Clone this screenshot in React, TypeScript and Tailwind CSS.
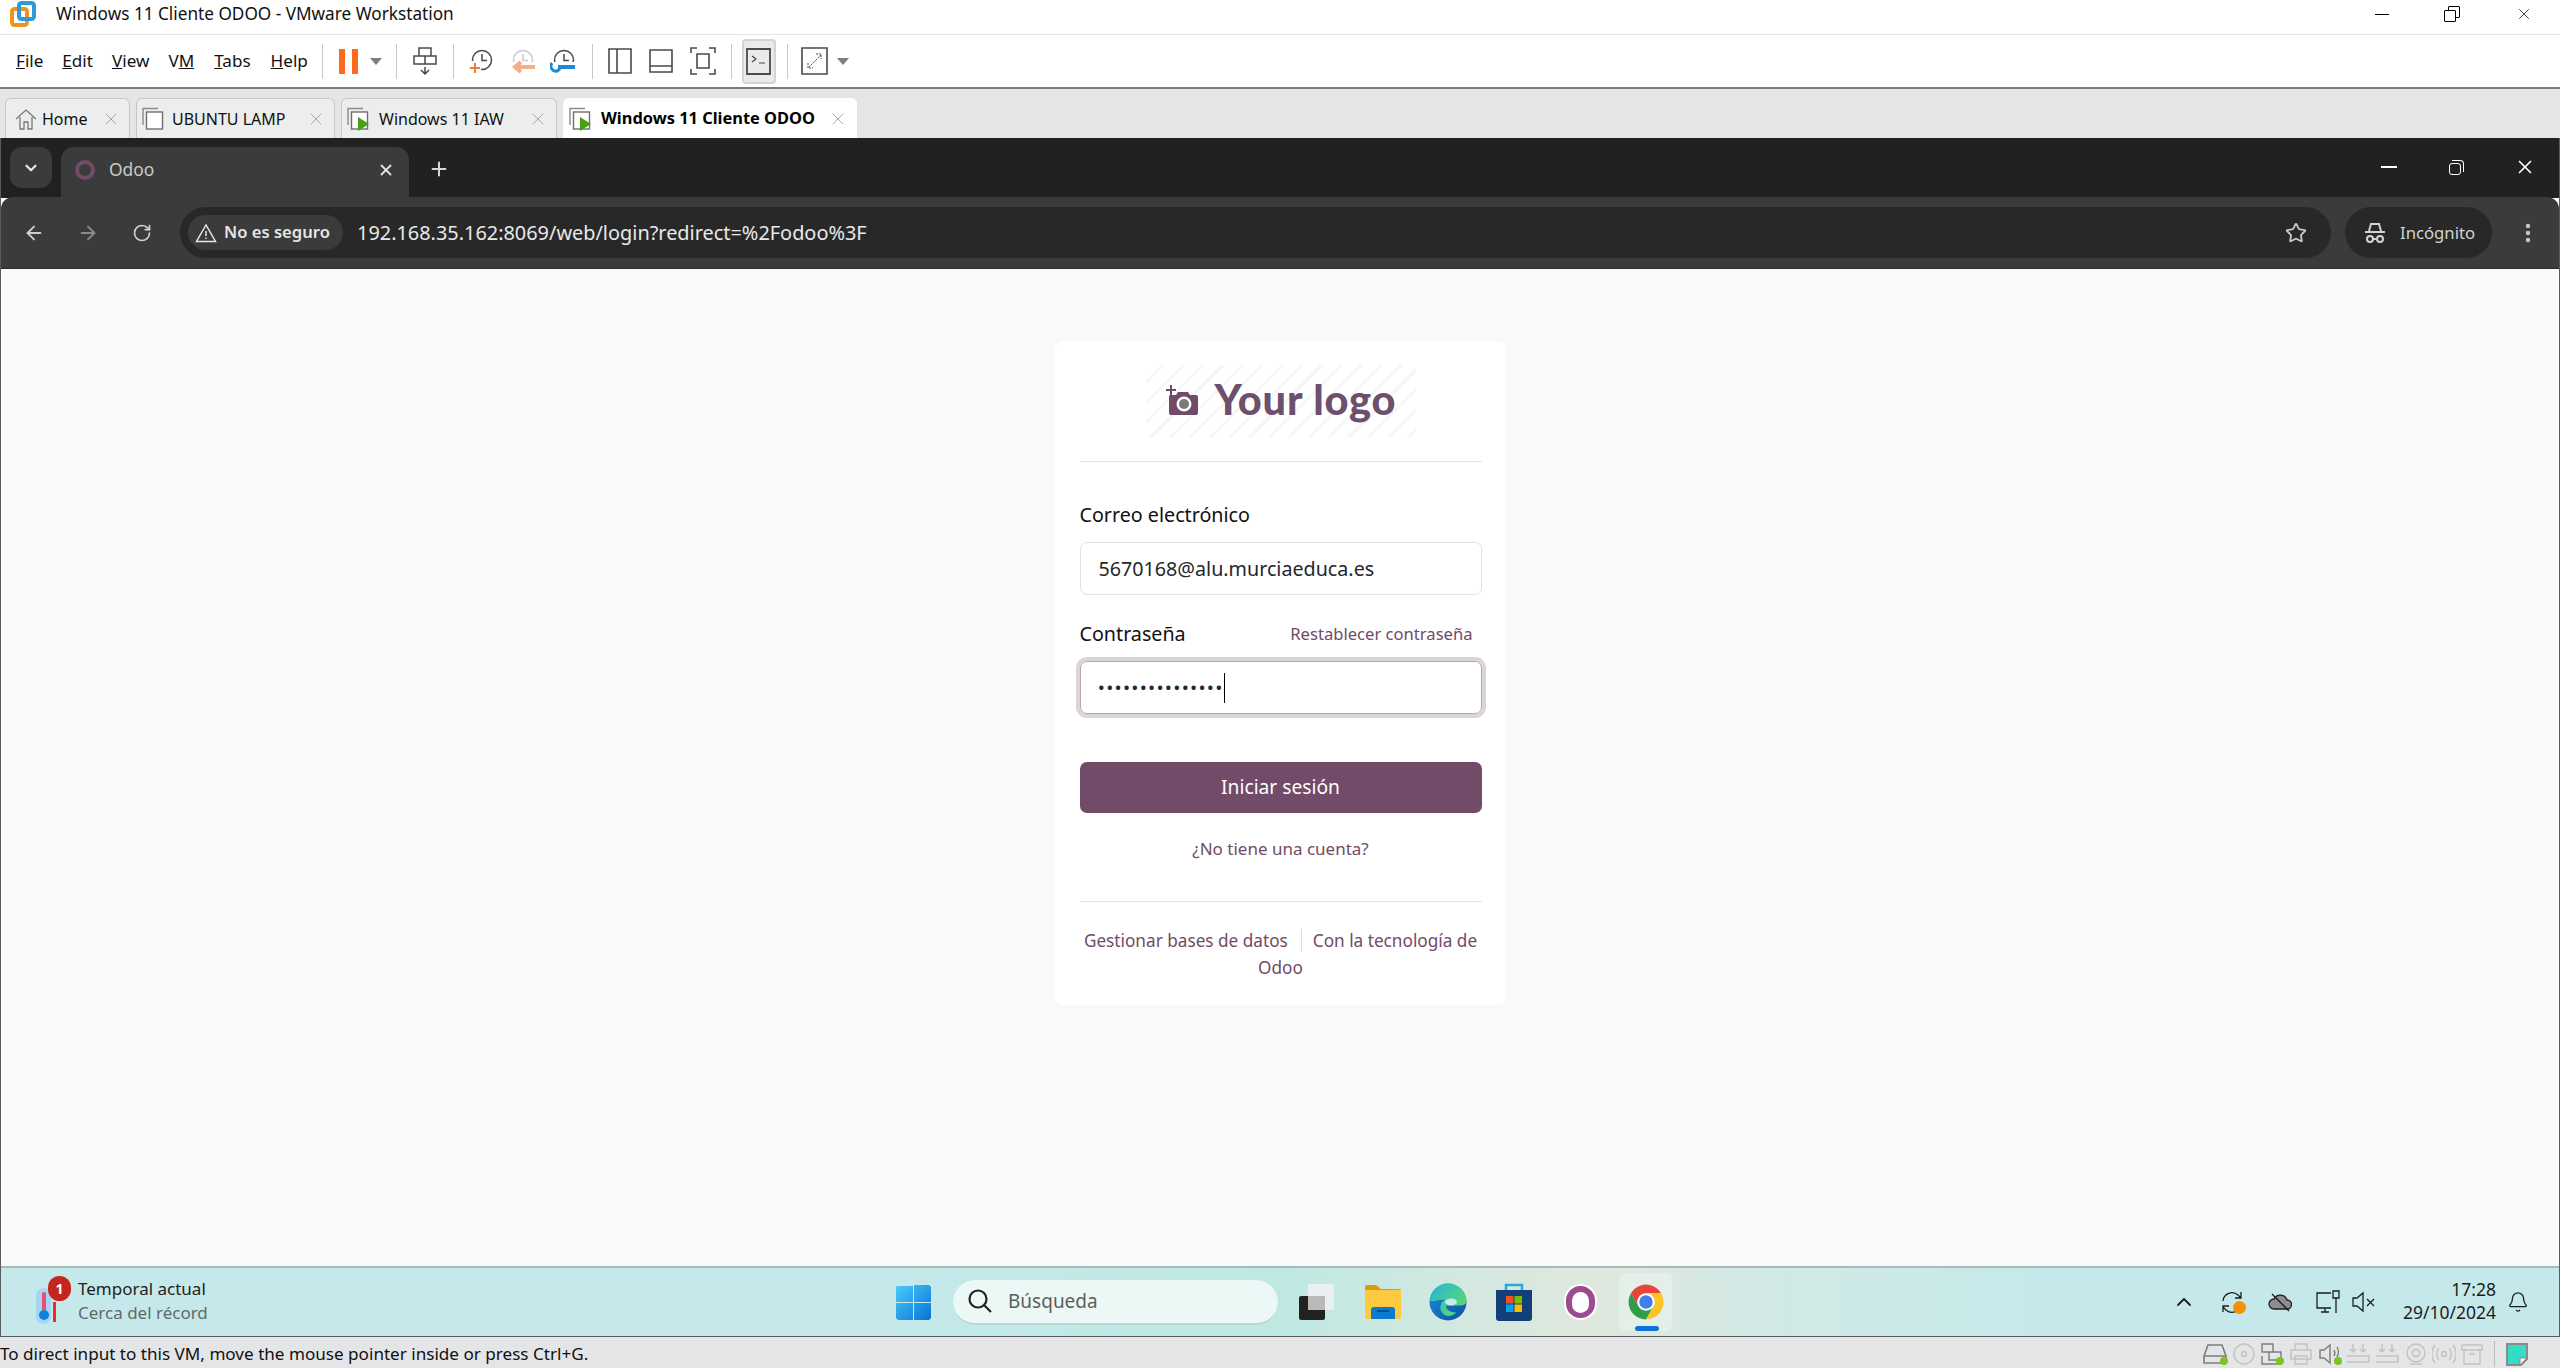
import { ArrowLeft, ArrowRight, BellIcon, ChevronDown, ChevronUp, MoreVertical, Plus, RotateCw, Star, X } from "lucide-react"

function Sep({ className }: { className: string }) {
  return <div className={`w-px h-[35px] bg-[#c8c8c8] ${className}`} />
}

function Caret({ className = "" }: { className?: string }) {
  return (
    <svg width="12" height="7" viewBox="0 0 12 7" className={className}>
      <path d="M0 0h12L6 7z" fill="#7d7d7d" />
    </svg>
  )
}

function VmwareLogo() {
  return (
    <svg width="26" height="26" viewBox="0 0 26 26">
      <rect x="2" y="8" width="15" height="16" rx="2.5" fill="none" stroke="#f0931e" strokeWidth="4" />
      <rect x="9" y="2" width="15" height="16" rx="2.5" fill="none" stroke="#2d9bd8" strokeWidth="4" />
    </svg>
  )
}

function SnapshotIcon({ kind }: { kind: "add" | "back" | "manage" }) {
  const ring = kind === "back" ? "#c9c9c9" : "#4a4a4a"
  return (
    <svg width="26" height="26" viewBox="0 0 26 26" fill="none">
      <circle cx="14" cy="12" r="9.5" stroke={ring} strokeWidth="1.5" />
      <path d="M14 6v6.5h5" stroke={ring} strokeWidth="1.5" />
      {kind === "add" && (
        <>
          <rect x="1" y="13" width="12" height="12" fill="#fff" />
          <path d="M7 15v10M2 20h10" stroke="#f47a3a" strokeWidth="2" />
        </>
      )}
      {kind === "back" && (
        <>
          <rect x="1" y="14" width="25" height="9" fill="#fff" />
          <path d="M26 19H8M12 14l-6 5 6 5" stroke="#f8ad8a" strokeWidth="4" />
        </>
      )}
      {kind === "manage" && (
        <>
          <rect x="1" y="14" width="25" height="11" fill="#fff" />
          <path d="M25 19H8" stroke="#1d8ad6" strokeWidth="4" />
          <path d="M2 15a5 5 0 0 0 5 8 5 5 0 0 0 3-4" stroke="#1d8ad6" strokeWidth="3" />
        </>
      )}
    </svg>
  )
}

function VmPageIcon({ play }: { play?: boolean }) {
  return (
    <svg width="24" height="24" viewBox="0 0 24 24" fill="none">
      <path d="M1 18V1.5h15" stroke="#8a8a8a" strokeWidth="1.4" />
      <rect x="4.5" y="5" width="16" height="17" stroke="#6f6f6f" strokeWidth="1.4" fill="#fff" />
      {play && <path d="M11 10l11 7-11 7z" fill="#46a011" />}
    </svg>
  )
}

function VmTab({ label, icon, w, active, gap }: { label: string; icon: React.ReactNode; w: string; active?: boolean; gap: string }) {
  return (
    <div
      className={`${w} h-[40px] flex items-center pl-[5px] rounded-t-[6px] border border-b-0 ${
        active ? "bg-white border-white font-bold text-black text-[16.4px]" : "bg-[#eceded] border-[#c4c6c8] text-[#111] text-[16px]"
      }`}
    >
      {icon}
      <span className={`${gap} whitespace-nowrap flex-1`}>{label}</span>
      <X size={20} strokeWidth={1.2} className="text-[#a9a9a9] mr-[8px]" />
    </div>
  )
}

function WinLogo() {
  return (
    <svg width="35" height="35" viewBox="0 0 35 35">
      <defs>
        <linearGradient id="win" x1="0" y1="0" x2="1" y2="1">
          <stop offset="0" stopColor="#4ccbfb" />
          <stop offset="1" stopColor="#0673d5" />
        </linearGradient>
      </defs>
      <path d="M1 1h16v16H0V2zM18 0h15l2 2v15H18zM0 18h17v17H2l-2-2zM18 18h17v15l-2 2H18z" fill="url(#win)" />
    </svg>
  )
}

function ChromeIcon() {
  return (
    <svg width="38" height="38" viewBox="0 0 48 48">
      <circle cx="24" cy="24" r="12" fill="#fff" />
      <path d="M4.95 13A22 22 0 0 1 43.05 13L24 13A11 11 0 0 0 14.47 29.5Z" fill="#e8453a" />
      <path d="M4.95 13A22 22 0 0 0 24 46L33.53 29.5A11 11 0 0 1 14.47 29.5Z" fill="#2f9e4a" />
      <path d="M24 46A22 22 0 0 0 43.05 13L24 13A11 11 0 0 1 33.53 29.5Z" fill="#fcc425" />
      <circle cx="24" cy="24" r="8.5" fill="#3f7fe8" />
    </svg>
  )
}

function EdgeIcon() {
  return (
    <svg width="38" height="38" viewBox="0 0 38 38">
      <defs>
        <linearGradient id="edgeA" x1="0" y1="0" x2="1" y2="0.7">
          <stop offset="0" stopColor="#22b7d9" />
          <stop offset="1" stopColor="#5ed86e" />
        </linearGradient>
        <linearGradient id="edgeB" x1="0" y1="0" x2="1" y2="1">
          <stop offset="0" stopColor="#1a93dd" />
          <stop offset="1" stopColor="#0b4f9e" />
        </linearGradient>
      </defs>
      <circle cx="19" cy="19" r="18.5" fill="url(#edgeB)" />
      <path d="M1 17C3 6 11 .5 19 .5c10 0 18 8 18.5 17 0 4-3 5-7 5H17c0 4 4 7 10 7-3 4-11 5-14 0-3-4-2-10 3-13-6 0-12 3-15 1z" fill="url(#edgeA)" />
      <ellipse cx="22" cy="19" rx="6" ry="3.6" fill="#c8ebe5" />
    </svg>
  )
}

function StoreIcon() {
  return (
    <svg width="36" height="38" viewBox="0 0 36 38">
      <path d="M10 7V2h16v5" fill="none" stroke="#29a4e0" strokeWidth="2.5" />
      <path d="M0 7h36v28a3 3 0 0 1-3 3H3a3 3 0 0 1-3-3z" fill="#123f78" />
      <rect x="10" y="13" width="7.5" height="7.5" fill="#f25022" />
      <rect x="18.5" y="13" width="7.5" height="7.5" fill="#7fba00" />
      <rect x="10" y="21.5" width="7.5" height="7.5" fill="#00a4ef" />
      <rect x="18.5" y="21.5" width="7.5" height="7.5" fill="#ffb900" />
    </svg>
  )
}

function FolderIcon() {
  return (
    <svg width="36" height="34" viewBox="0 0 36 34">
      <path d="M0 2a2 2 0 0 1 2-2h9l5 4h18a2 2 0 0 1 2 2v4H0z" fill="#dc9d0c" />
      <path d="M0 5h36v27a2 2 0 0 1-2 2H2a2 2 0 0 1-2-2z" fill="#fdc93f" />
      <path d="M6 34v-9a3 3 0 0 1 3-3h18a3 3 0 0 1 3 3v9z" fill="#0c7bcd" />
      <path d="M12 26h12" stroke="#063f7d" strokeWidth="1.5" />
    </svg>
  )
}

function TaskViewIcon() {
  return (
    <svg width="36" height="36" viewBox="0 0 36 36">
      <rect x="0" y="12" width="26" height="24" rx="2" fill="#222" />
      <rect x="9" y="0" width="26" height="26" rx="2" fill="#f1f1f1" fillOpacity="0.85" />
      <rect x="9" y="12" width="17" height="14" fill="#b9b9b9" />
    </svg>
  )
}

function TrayIcon({ children, w = 24 }: { children: React.ReactNode; w?: number }) {
  return (
    <svg width={w} height="24" viewBox={`0 0 ${w} 24`} fill="none" stroke="#1d1d1d" strokeWidth="1.3">
      {children}
    </svg>
  )
}

function StatusIcon({ children, className }: { children: React.ReactNode; className: string }) {
  return (
    <svg width="24" height="24" viewBox="0 0 24 24" fill="none" stroke="#c2c2c2" strokeWidth="1.4" className={className}>
      {children}
    </svg>
  )
}

export default function App() {
  return (
    <div className="w-[2560px] h-[1368px] overflow-hidden flex flex-col bg-white text-black font-['Noto_Sans','Open_Sans',sans-serif]">
      {/* vmware title bar */}
      <div className="h-[34px] flex items-center shrink-0 pb-[6px]">
        <div className="ml-[10px]"><VmwareLogo /></div>
        <span className="ml-[20px] text-[17.2px] text-[#111] whitespace-nowrap">Windows 11 Cliente ODOO - VMware Workstation</span>
        <div className="ml-auto flex items-center mr-[27px]">
          <div className="w-[14px] h-px bg-black" />
          <div className="relative w-[16px] h-[16px] ml-[55px]">
            <div className="absolute right-0 top-0 w-[12px] h-[12px] border border-black rounded-[1px]" />
            <div className="absolute left-0 bottom-0 w-[12px] h-[12px] border border-black bg-white rounded-[1px]" />
          </div>
          <X size={18} strokeWidth={1} className="ml-[55px]" />
        </div>
      </div>

      {/* menu and toolbar */}
      <div className="h-[55px] shrink-0 flex items-center border-t border-t-[#e4e4e4] border-b-2 border-b-[#7a7a7a] text-[17.1px] text-[#111]">
        <span className="ml-[16px]"><u>F</u>ile</span>
        <span className="ml-[19px]"><u>E</u>dit</span>
        <span className="ml-[19px]"><u>V</u>iew</span>
        <span className="ml-[19px]">V<u>M</u></span>
        <span className="ml-[20px]"><u>T</u>abs</span>
        <span className="ml-[20px]"><u>H</u>elp</span>
        <Sep className="ml-[14px]" />
        <div className="ml-[16px] flex gap-[7px]">
          <div className="w-[6px] h-[25px] bg-[#fb6a1f]" />
          <div className="w-[6px] h-[25px] bg-[#fb6a1f]" />
        </div>
        <Caret className="ml-[12px]" />
        <Sep className="ml-[14px]" />
        <svg width="24" height="28" viewBox="0 0 24 28" fill="none" stroke="#4a4a4a" strokeWidth="1.5" className="ml-[16px]">
          <path d="M6 1h12v8H6zM1 9h22v8H1zM12 9v8M12 20v7M8 23l4 4 4-4" />
        </svg>
        <Sep className="ml-[16px]" />
        <div className="ml-[14px]"><SnapshotIcon kind="add" /></div>
        <div className="ml-[15px]"><SnapshotIcon kind="back" /></div>
        <div className="ml-[15px]"><SnapshotIcon kind="manage" /></div>
        <Sep className="ml-[16px]" />
        <svg width="24" height="26" viewBox="0 0 24 26" fill="none" stroke="#4a4a4a" strokeWidth="1.6" className="ml-[15px]">
          <path d="M1 1h22v24H1zM9 1v24" />
        </svg>
        <svg width="24" height="24" viewBox="0 0 24 24" fill="none" stroke="#4a4a4a" strokeWidth="1.6" className="ml-[17px]">
          <path d="M1 1h22v22H1zM1 17h22" />
        </svg>
        <svg width="26" height="28" viewBox="0 0 26 28" fill="none" stroke="#4a4a4a" strokeWidth="1.6" className="ml-[17px]">
          <path d="M1 6V1h6M19 1h6v5M25 22v5h-6M7 27H1v-5M7 7h12v14H7z" />
        </svg>
        <Sep className="ml-[15px]" />
        <div className="ml-[10px] w-[34px] h-[45px] rounded-[4px] bg-[#e9eaec] border-2 border-[#d2d4d6] flex items-center justify-center">
          <svg width="25" height="27" viewBox="0 0 25 27" fill="none" stroke="#4a4a4a">
            <path d="M1 1h23v25H1z" strokeWidth="1.8" />
            <path d="M6 8l4 3-4 3M13 15h6" strokeWidth="1.2" />
          </svg>
        </div>
        <Sep className="ml-[11px]" />
        <svg width="27" height="28" viewBox="0 0 27 28" fill="none" stroke="#4a4a4a" className="ml-[13px]">
          <path d="M1 1h25v26H1z" strokeWidth="1.6" />
          <path d="M8 20L20 8M15 7h5v5M7 16v5h5" strokeWidth="1" strokeDasharray="2 1" />
        </svg>
        <Caret className="ml-[9px]" />
      </div>

      {/* vm tabs */}
      <div className="h-[49px] shrink-0 bg-[#e4e5e7] flex items-end gap-[6px] pl-[5px]">
        <VmTab
          w="w-[125px]"
          gap="ml-[5px]"
          label="Home"
          icon={
            <svg width="22" height="22" viewBox="0 0 22 22" fill="none" stroke="#777" strokeWidth="1.3" className="ml-[4px]">
              <path d="M1 11L11 2l10 9M5 9v12h4v-7h4v7h4V9" />
            </svg>
          }
        />
        <VmTab w="w-[199px]" gap="ml-[6px]" label="UBUNTU LAMP" icon={<VmPageIcon />} />
        <VmTab w="w-[216px]" gap="ml-[8px]" label="Windows 11 IAW" icon={<VmPageIcon play />} />
        <VmTab w="w-[294px]" gap="ml-[8px]" active label="Windows 11 Cliente ODOO" icon={<VmPageIcon play />} />
      </div>

      {/* browser window */}
      <div className="flex-1 flex flex-col border-x border-x-[#5c5c5c] min-h-0">
        <div className="h-[60px] shrink-0 bg-[#202221] flex items-end text-white">
          <div className="ml-[9px] mb-[10px] w-[42px] h-[41px] rounded-[12px] bg-[#3b3b3b] flex items-center justify-center">
            <ChevronDown size={18} strokeWidth={3} className="text-[#e8e8e8]" />
          </div>
          <div className="ml-[9px] w-[348px] h-[51px] rounded-t-[13px] bg-[#3b3b3b] flex items-center pb-[6px]">
            <div className="ml-[14px] w-[20px] h-[20px] rounded-full border-[4px] border-[#714b67]" />
            <span className="ml-[14px] text-[#c9c9c9] text-[17.4px]">Odoo</span>
            <X size={18} strokeWidth={2.4} className="ml-auto mr-[14px] text-[#e3e3e3]" />
          </div>
          <Plus size={22} strokeWidth={2.2} className="ml-[19px] mb-[18px] text-[#d8d8d8]" />
          <div className="ml-auto flex items-center mb-[20px] mr-[23px]">
            <div className="w-[16px] h-[2px] bg-white" />
            <div className="relative w-[15px] h-[15px] ml-[52px]">
              <div className="absolute right-0 top-0 w-[12px] h-[12px] border-t-[1.5px] border-r-[1.5px] border-white rounded-tr-[4px]" />
              <div className="absolute left-0 bottom-0 w-[12px] h-[12px] border-[1.5px] border-white bg-[#202221] rounded-[3px]" />
            </div>
            <X size={22} strokeWidth={1.8} className="ml-[50px]" />
          </div>
        </div>

        <div className="h-[72px] shrink-0 bg-[#3b3b3b] rounded-t-[12px] -mt-px flex items-center text-[#c8c8c8] border-b border-b-[#2f2f2f]">
          <ArrowLeft size={22} className="ml-[22px] text-[#d0d0d0]" />
          <ArrowRight size={22} className="ml-[32px] text-[#8a8a8a]" />
          <RotateCw size={20} className="ml-[33px] text-[#d0d0d0]" />
          <div className="ml-[28px] w-[2151px] h-[51px] rounded-full bg-[#282828] flex items-center pl-[8px]">
            <div className="h-[35px] w-[155px] rounded-full bg-[#3b3b3b] flex items-center text-[#e6e6e6] shrink-0">
              <svg width="22" height="20" viewBox="0 0 22 20" fill="none" stroke="#e6e6e6" strokeWidth="1.5" className="ml-[7px]">
                <path d="M11 2L1.5 18.5h19zM11 8v5M11 14.5v1.5" />
              </svg>
              <span className="ml-[7px] text-[16.6px] font-semibold whitespace-nowrap">No es seguro</span>
            </div>
            <span className="ml-[14px] text-[19.9px] text-[#e8e8e8] whitespace-nowrap">192.168.35.162:8069/web/login?redirect=%2Fodoo%3F</span>
            <Star size={22} strokeWidth={2} className="ml-auto mr-[24px] text-[#c8c8c8]" />
          </div>
          <div className="ml-[14px] w-[147px] h-[51px] rounded-full bg-[#282828] flex items-center">
            <svg width="22" height="22" viewBox="0 0 22 22" fill="none" stroke="#d2d2d2" strokeWidth="2" className="ml-[19px]">
              <path d="M5 9l2-7h8l2 7M1 10h20" />
              <circle cx="6" cy="17" r="3" />
              <circle cx="16" cy="17" r="3" />
              <path d="M9 17h4" />
            </svg>
            <span className="ml-[14px] text-[16.7px] text-[#d2d2d2]">Incógnito</span>
          </div>
          <MoreVertical size={24} strokeWidth={2.4} className="ml-[24px] text-[#c8c8c8]" />
        </div>

        {/* odoo login */}
        <main className="flex-1 bg-[#f8f9fb] flex flex-col items-center pt-[72px] min-h-0">
          <div className="w-[451px] bg-white rounded-[8px] pl-[25px] pr-[24px] pt-[24px] pb-[24px] flex flex-col">
            <div className="self-center w-[270px] h-[72px] flex items-center bg-[repeating-linear-gradient(135deg,#ffffff_0px,#ffffff_11px,#f6f6f7_11px,#f6f6f7_14px)]">
              <svg width="34" height="31" viewBox="0 0 34 31" className="ml-[19px] shrink-0 -mt-[2px]">
                <path d="M6 0v10M1 5h10" stroke="#714b67" strokeWidth="2" />
                <path d="M5 10h6l2-3h10l2 3h6a2 2 0 0 1 2 2v16a2 2 0 0 1-2 2H6a2 2 0 0 1-2-2V11z" fill="#714b67" />
                <circle cx="19" cy="19" r="7.5" fill="#fff" />
                <circle cx="19" cy="19" r="5" fill="#7b7b7b" />
              </svg>
              <span className="ml-[16px] -mt-[2px] text-[41.5px] leading-none font-black tracking-[0.8px] text-[#6d4f6e] font-['Lato',sans-serif] whitespace-nowrap">Your logo</span>
            </div>
            <div className="mt-[24px] h-px bg-[#e2e3e7]" />

            <label className="mt-[41px] text-[19.7px] leading-[24px] text-[#111]">Correo electrónico</label>
            <div className="mt-[15px] h-[53px] rounded-[7px] border border-[#e0e2e6] flex items-center pl-[18px] text-[19.7px] text-[#24272c]">
              5670168@alu.murciaeduca.es
            </div>

            <div className="mt-[27px] flex items-center justify-between pr-[9px]">
              <label className="text-[19.7px] leading-[24px] text-[#111]">Contraseña</label>
              <span className="text-[16.6px] leading-[24px] text-[#714b67]">Restablecer contraseña</span>
            </div>
            <div className="mt-[15px] h-[53px] rounded-[7px] border border-[#b8a5b3] shadow-[0_0_0_4px_#ddd3db] flex items-center pl-[18px]">
              <span className="text-[#24272c] text-[15px] tracking-[2.75px] font-bold leading-none">•••••••••••••••</span>
              <div className="w-px h-[30px] bg-black" />
            </div>

            <button className="mt-[48px] h-[51px] rounded-[7px] bg-[#714b67] text-white text-[19.2px]">Iniciar sesión</button>
            <span className="mt-[23px] text-center text-[17px] leading-[26px] text-[#714b67]">¿No tiene una cuenta?</span>

            <div className="mt-[39px] h-px bg-[#e2e3e7]" />
            <div className="mt-[25px] text-center text-[17.2px] leading-[27px] text-[#714b67]">
              <span>Gestionar bases de datos</span>
              <span className="border-l border-l-[#dcdcdc] ml-[13px] pl-[11px]">Con la tecnología de</span>
              <br />
              <span>Odoo</span>
            </div>
          </div>
        </main>

        {/* windows taskbar */}
        <div className="h-[71px] shrink-0 border-t-2 border-t-[#a9b9ba] border-b border-b-[#5c5c5c] bg-[linear-gradient(90deg,#c5e9ea_0%,#c5e9ea_35%,#bfe8e3_50%,#e0e8de_62%,#d0e9e6_70%,#c5e9ea_80%,#c5e9ea_100%)] flex items-center">
          <div className="relative ml-[33px] w-[38px] h-[50px] shrink-0 -mt-[3px]">
            <div className="absolute left-[2px] top-[12px] w-[15px] h-[36px] rounded-full bg-[#a8d3f2] flex flex-col items-center justify-end pb-[4px]">
              <div className="w-[4px] h-[18px] bg-[#e4536c] rounded-t-full" />
              <div className="w-[10px] h-[10px] rounded-full bg-[#0e83d8]" />
            </div>
            <div className="absolute left-[19px] top-[26px] w-[3px] h-[20px] bg-[#ee2b24]" />
            <div className="absolute left-[14px] top-[0px] w-[23px] h-[25px] rounded-full bg-[#c4261c] flex items-center justify-center text-white text-[14px] font-bold">1</div>
          </div>
          <div className="ml-[6px] w-[301px] flex flex-col leading-[24px] shrink-0 -mt-[2px]">
            <span className="text-[17px] text-[#222]">Temporal actual</span>
            <span className="text-[17px] text-[#5f6a6b]">Cerca del récord</span>
          </div>
          <div className="ml-[517px]"><WinLogo /></div>
          <div className="ml-[22px] w-[325px] h-[45px] rounded-full bg-[#ecf8f6] border-b-2 border-b-[#b9d6d3] flex items-center">
            <svg width="26" height="26" viewBox="0 0 26 26" fill="none" stroke="#222" strokeWidth="2.2" className="ml-[14px]">
              <circle cx="11" cy="11" r="8.5" />
              <path d="M17 17l7 7" />
            </svg>
            <span className="ml-[15px] text-[19px] text-[#5d5d5d]">Búsqueda</span>
          </div>
          <div className="ml-[21px]"><TaskViewIcon /></div>
          <div className="ml-[30px]"><FolderIcon /></div>
          <div className="ml-[28px]"><EdgeIcon /></div>
          <div className="ml-[29px]"><StoreIcon /></div>
          <div className="ml-[32px] w-[33px] h-[36px] rounded-full bg-[#9c4b91] border-2 border-white flex items-center justify-center">
            <div className="w-[17px] h-[21px] rounded-full bg-white" />
          </div>
          <div className="ml-[22px] relative w-[53px] h-[58px] rounded-[6px] bg-[#e4efe9] flex items-center justify-center">
            <ChromeIcon />
            <div className="absolute bottom-0 left-[16px] w-[24px] h-[5px] rounded-full bg-[#0b74d6]" />
          </div>

          <div className="ml-[500px]">
            <ChevronUp size={24} strokeWidth={1.8} className="text-[#1d1d1d]" />
          </div>
          <div className="ml-[24px]">
            <div className="relative w-[24px] h-[24px]">
              <TrayIcon>
                <path d="M3 11a9 9 0 0 1 15-6l3 3M21 2v6h-6M21 14a9 9 0 0 1-15 6l-3-3M3 22v-6h6" />
              </TrayIcon>
              <div className="absolute right-[-2px] bottom-[0px] w-[13px] h-[13px] rounded-full bg-[#f59000]" />
            </div>
          </div>
          <div className="ml-[24px]">
            <TrayIcon>
              <path d="M6 19a5 5 0 0 1 0-10 7 7 0 0 1 13 1 4.5 4.5 0 0 1 0 9z" fill="#8d8d8d" />
              <path d="M4 4l17 17" />
            </TrayIcon>
          </div>
          <div className="ml-[24px]">
            <TrayIcon>
              <path d="M15 3H1v15h14M5 22h8M9 18v4M20 8v15M17 1h6v7h-6z" />
            </TrayIcon>
          </div>
          <div className="ml-[11px]">
            <TrayIcon>
              <path d="M2 8h4l6-5v18l-6-5H2zM16 9l7 7M23 9l-7 7" />
            </TrayIcon>
          </div>
          <div className="ml-[9px] w-[112px] text-right text-[17.5px] leading-[23px] text-[#1d1d1d] shrink-0 -mt-[2px]">
            <div>17:28</div>
            <div>29/10/2024</div>
          </div>
          <BellIcon size={22} strokeWidth={1.4} className="ml-[11px] text-[#1d1d1d]" />
        </div>
      </div>

      {/* vmware status bar */}
      <div className="h-[31px] shrink-0 bg-[#e4e5e7] flex items-center text-[17.1px] text-[#111]">
        <span className="whitespace-nowrap mt-[2px]">To direct input to this VM, move the mouse pointer inside or press Ctrl+G.</span>
        <div className="ml-auto flex items-center mr-[32px] mt-[3px]">
          <div className="relative">
            <svg width="24" height="22" viewBox="0 0 24 22" fill="none" stroke="#7d7d7d" strokeWidth="1.6">
              <path d="M5 2h14l4 11v7H1v-7zM1 13h22" />
            </svg>
            <div className="absolute right-[-1px] bottom-0 w-[8px] h-[8px] rounded-full bg-[#7ac51e]" />
          </div>
          <StatusIcon className="ml-[5px]">
            <circle cx="12" cy="12" r="10" />
            <circle cx="12" cy="12" r="2.5" />
          </StatusIcon>
          <div className="relative ml-[5px]">
            <svg width="22" height="22" viewBox="0 0 22 22" fill="none" stroke="#7d7d7d" strokeWidth="1.4">
              <path d="M1 1h11v8H1zM8 9h12v8H8zM1 13v8h17" />
            </svg>
            <div className="absolute right-[-1px] bottom-0 w-[8px] h-[8px] rounded-full bg-[#7ac51e]" />
          </div>
          <StatusIcon className="ml-[6px]">
            <path d="M6 8V2h12v6M2 8h20v9H2zM6 14h12v8H6z" />
          </StatusIcon>
          <div className="relative ml-[6px]">
            <svg width="22" height="22" viewBox="0 0 22 22" fill="none" stroke="#7d7d7d" strokeWidth="1.4">
              <path d="M1 7h4l6-5v18l-6-5H1zM15 7a6 6 0 0 1 0 6M18 4a10 10 0 0 1 0 10" />
            </svg>
            <div className="absolute right-[-1px] bottom-0 w-[8px] h-[8px] rounded-full bg-[#7ac51e]" />
          </div>
          <StatusIcon className="ml-[5px]">
            <path d="M7 2v8M4 7l3 3 3-3M17 2v8M14 7l3 3 3-3M1 14h22v6H1" />
          </StatusIcon>
          <StatusIcon className="ml-[5px]">
            <path d="M7 2v8M4 7l3 3 3-3M17 2v8M14 7l3 3 3-3M1 14h22v6H1" />
          </StatusIcon>
          <StatusIcon className="ml-[5px]">
            <circle cx="12" cy="11" r="9" />
            <circle cx="12" cy="11" r="3.5" />
            <path d="M6 22h12" />
          </StatusIcon>
          <StatusIcon className="ml-[4px]">
            <circle cx="12" cy="12" r="2.5" />
            <path d="M7 6a9 9 0 0 0 0 12M17 6a9 9 0 0 1 0 12M3 3a14 14 0 0 0 0 18M21 3a14 14 0 0 1 0 18" />
          </StatusIcon>
          <StatusIcon className="ml-[4px]">
            <path d="M2 3h20v5H2zM4 8v14h16V8M9 12h6" />
          </StatusIcon>
          <div className="ml-[10px] w-px h-[26px] bg-[#bcbcbc]" />
          <svg width="22" height="23" viewBox="0 0 22 23" className="ml-[11px]">
            <path d="M1 1h20v15l-6 6H1z" fill="#35dcc5" stroke="#8a8a8a" strokeWidth="2" />
            <path d="M21 15h-7v7z" fill="#f3f3f3" stroke="#8a8a8a" strokeWidth="1" />
          </svg>
        </div>
      </div>
    </div>
  )
}
